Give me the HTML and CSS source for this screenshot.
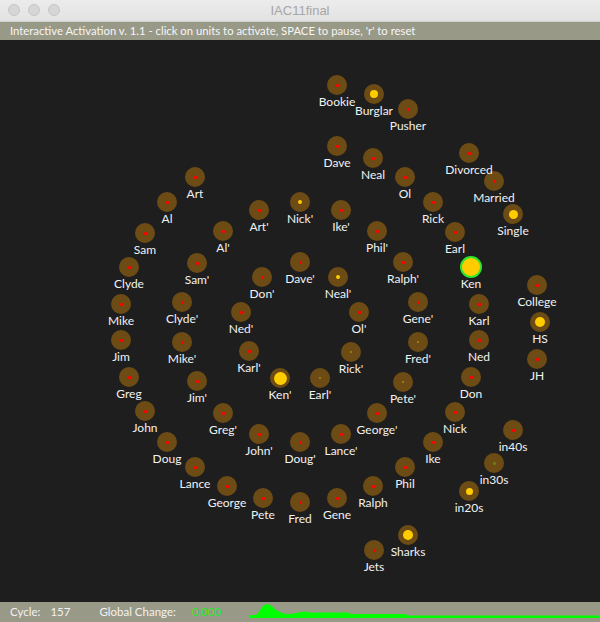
FILE: index.html
```html
<!DOCTYPE html>
<html>
<head>
<meta charset="utf-8">
<title>IAC11final</title>
<link rel="stylesheet" href="styles.css">
</head>
<body>
<div class="window">
  <div class="titlebar">
    <div class="lights"><span class="light"></span><span class="light"></span><span class="light"></span></div>
    <div class="title">IAC11final</div>
  </div>
  <div class="header">Interactive Activation v. 1.1 - click on units to activate, SPACE to pause, 'r' to reset</div>
  <div class="canvas">
    <div class="node" style="left:337px;top:45px"><span class="disc"><i class="dot red"></i></span><span class="lbl">Bookie</span></div>
    <div class="node" style="left:374px;top:54px"><span class="disc"><i class="dot yel" style="width:8px;height:8px"></i></span><span class="lbl">Burglar</span></div>
    <div class="node" style="left:408px;top:69px"><span class="disc"><i class="dot red"></i></span><span class="lbl">Pusher</span></div>
    <div class="node" style="left:337px;top:106px"><span class="disc"><i class="dot red"></i></span><span class="lbl">Dave</span></div>
    <div class="node" style="left:373px;top:118px"><span class="disc"><i class="dot red"></i></span><span class="lbl">Neal</span></div>
    <div class="node" style="left:405px;top:137px"><span class="disc"><i class="dot red"></i></span><span class="lbl">Ol</span></div>
    <div class="node" style="left:469px;top:113px"><span class="disc"><i class="dot red"></i></span><span class="lbl">Divorced</span></div>
    <div class="node" style="left:494px;top:141px"><span class="disc"><i class="dot red"></i></span><span class="lbl">Married</span></div>
    <div class="node" style="left:513px;top:174px"><span class="disc"><i class="dot yel" style="width:9px;height:9px"></i></span><span class="lbl">Single</span></div>
    <div class="node" style="left:433px;top:162px"><span class="disc"><i class="dot red"></i></span><span class="lbl">Rick</span></div>
    <div class="node" style="left:455px;top:192px"><span class="disc"><i class="dot red"></i></span><span class="lbl">Earl</span></div>
    <div class="node" style="left:471px;top:227px"><span class="disc ken"></span><span class="lbl">Ken</span></div>
    <div class="node" style="left:537px;top:245px"><span class="disc"><i class="dot red"></i></span><span class="lbl">College</span></div>
    <div class="node" style="left:479px;top:264px"><span class="disc"><i class="dot red"></i></span><span class="lbl">Karl</span></div>
    <div class="node" style="left:540px;top:282px"><span class="disc"><i class="dot yel" style="width:10px;height:10px"></i></span><span class="lbl">HS</span></div>
    <div class="node" style="left:479px;top:300px"><span class="disc"><i class="dot red"></i></span><span class="lbl">Ned</span></div>
    <div class="node" style="left:537px;top:319px"><span class="disc"><i class="dot red"></i></span><span class="lbl">JH</span></div>
    <div class="node" style="left:471px;top:337px"><span class="disc"><i class="dot red"></i></span><span class="lbl">Don</span></div>
    <div class="node" style="left:455px;top:372px"><span class="disc"><i class="dot red"></i></span><span class="lbl">Nick</span></div>
    <div class="node" style="left:513px;top:390px"><span class="disc"><i class="dot red"></i></span><span class="lbl">in40s</span></div>
    <div class="node" style="left:433px;top:402px"><span class="disc"><i class="dot red"></i></span><span class="lbl">Ike</span></div>
    <div class="node" style="left:494px;top:423px"><span class="disc"><i class="dot grn"></i></span><span class="lbl">in30s</span></div>
    <div class="node" style="left:405px;top:427px"><span class="disc"><i class="dot red"></i></span><span class="lbl">Phil</span></div>
    <div class="node" style="left:469px;top:451px"><span class="disc"><i class="dot yel" style="width:7px;height:7px"></i></span><span class="lbl">in20s</span></div>
    <div class="node" style="left:373px;top:446px"><span class="disc"><i class="dot red"></i></span><span class="lbl">Ralph</span></div>
    <div class="node" style="left:408px;top:495px"><span class="disc"><i class="dot yel" style="width:10px;height:10px"></i></span><span class="lbl">Sharks</span></div>
    <div class="node" style="left:374px;top:510px"><span class="disc"><i class="dot red"></i></span><span class="lbl">Jets</span></div>
    <div class="node" style="left:337px;top:458px"><span class="disc"><i class="dot red"></i></span><span class="lbl">Gene</span></div>
    <div class="node" style="left:300px;top:462px"><span class="disc"><i class="dot red"></i></span><span class="lbl">Fred</span></div>
    <div class="node" style="left:263px;top:458px"><span class="disc"><i class="dot red"></i></span><span class="lbl">Pete</span></div>
    <div class="node" style="left:227px;top:446px"><span class="disc"><i class="dot red"></i></span><span class="lbl">George</span></div>
    <div class="node" style="left:195px;top:427px"><span class="disc"><i class="dot red"></i></span><span class="lbl">Lance</span></div>
    <div class="node" style="left:167px;top:402px"><span class="disc"><i class="dot red"></i></span><span class="lbl">Doug</span></div>
    <div class="node" style="left:145px;top:371px"><span class="disc"><i class="dot red"></i></span><span class="lbl">John</span></div>
    <div class="node" style="left:129px;top:337px"><span class="disc"><i class="dot red"></i></span><span class="lbl">Greg</span></div>
    <div class="node" style="left:121px;top:300px"><span class="disc"><i class="dot red"></i></span><span class="lbl">Jim</span></div>
    <div class="node" style="left:121px;top:264px"><span class="disc"><i class="dot red"></i></span><span class="lbl">Mike</span></div>
    <div class="node" style="left:129px;top:227px"><span class="disc"><i class="dot red"></i></span><span class="lbl">Clyde</span></div>
    <div class="node" style="left:145px;top:193px"><span class="disc"><i class="dot red"></i></span><span class="lbl">Sam</span></div>
    <div class="node" style="left:167px;top:162px"><span class="disc"><i class="dot red"></i></span><span class="lbl">Al</span></div>
    <div class="node" style="left:195px;top:137px"><span class="disc"><i class="dot red"></i></span><span class="lbl">Art</span></div>

    <div class="node" style="left:259px;top:170px"><span class="disc"><i class="dot red"></i></span><span class="lbl">Art'</span></div>
    <div class="node" style="left:300px;top:162px"><span class="disc"><i class="dot yel" style="width:4px;height:4px"></i></span><span class="lbl">Nick'</span></div>
    <div class="node" style="left:341px;top:170px"><span class="disc"><i class="dot red"></i></span><span class="lbl">Ike'</span></div>
    <div class="node" style="left:377px;top:191px"><span class="disc"><i class="dot red"></i></span><span class="lbl">Phil'</span></div>
    <div class="node" style="left:403px;top:222px"><span class="disc"><i class="dot red"></i></span><span class="lbl">Ralph'</span></div>
    <div class="node" style="left:418px;top:262px"><span class="disc"><i class="dot red"></i></span><span class="lbl">Gene'</span></div>
    <div class="node" style="left:418px;top:302px"><span class="disc"><i class="dot olv"></i></span><span class="lbl">Fred'</span></div>
    <div class="node" style="left:403px;top:342px"><span class="disc"><i class="dot olv"></i></span><span class="lbl">Pete'</span></div>
    <div class="node" style="left:377px;top:373px"><span class="disc"><i class="dot red"></i></span><span class="lbl">George'</span></div>
    <div class="node" style="left:341px;top:394px"><span class="disc"><i class="dot red"></i></span><span class="lbl">Lance'</span></div>
    <div class="node" style="left:300px;top:402px"><span class="disc"><i class="dot red"></i></span><span class="lbl">Doug'</span></div>
    <div class="node" style="left:259px;top:394px"><span class="disc"><i class="dot red"></i></span><span class="lbl">John'</span></div>
    <div class="node" style="left:223px;top:373px"><span class="disc"><i class="dot red"></i></span><span class="lbl">Greg'</span></div>
    <div class="node" style="left:197px;top:341px"><span class="disc"><i class="dot red"></i></span><span class="lbl">Jim'</span></div>
    <div class="node" style="left:182px;top:302px"><span class="disc"><i class="dot red"></i></span><span class="lbl">Mike'</span></div>
    <div class="node" style="left:182px;top:262px"><span class="disc"><i class="dot red"></i></span><span class="lbl">Clyde'</span></div>
    <div class="node" style="left:197px;top:223px"><span class="disc"><i class="dot red"></i></span><span class="lbl">Sam'</span></div>
    <div class="node" style="left:223px;top:191px"><span class="disc"><i class="dot red"></i></span><span class="lbl">Al'</span></div>

    <div class="node" style="left:300px;top:222px"><span class="disc"><i class="dot red"></i></span><span class="lbl">Dave'</span></div>
    <div class="node" style="left:338px;top:237px"><span class="disc"><i class="dot yel" style="width:4px;height:4px"></i></span><span class="lbl">Neal'</span></div>
    <div class="node" style="left:359px;top:272px"><span class="disc"><i class="dot red"></i></span><span class="lbl">Ol'</span></div>
    <div class="node" style="left:351px;top:312px"><span class="disc"><i class="dot olv"></i></span><span class="lbl">Rick'</span></div>
    <div class="node" style="left:320px;top:338px"><span class="disc"><i class="dot olv"></i></span><span class="lbl">Earl'</span></div>
    <div class="node" style="left:280px;top:338px"><span class="disc"><i class="dot yel" style="width:13px;height:13px"></i></span><span class="lbl">Ken'</span></div>
    <div class="node" style="left:249px;top:311px"><span class="disc"><i class="dot red"></i></span><span class="lbl">Karl'</span></div>
    <div class="node" style="left:241px;top:272px"><span class="disc"><i class="dot red"></i></span><span class="lbl">Ned'</span></div>
    <div class="node" style="left:262px;top:237px"><span class="disc"><i class="dot red"></i></span><span class="lbl">Don'</span></div>
  </div>
  <div class="footer">
    <span class="stat-label">Cycle:</span>
    <span class="stat-value">157</span>
    <span class="stat-label change">Global Change:</span>
    <span class="stat-green">0.000</span>
    <svg class="graph" width="352" height="20" viewBox="0 0 352 20">
      <polygon fill="#00ff00" points="2,16 2,13 8,13 10,11 12,8 14,5 16,3 19,2 22,3 24,4 26,6 28,8 30,9 33,10.5 36,11.5 40,12 44,11.8 48,11 52,10 56,9.7 60,9.8 62,10.5 64,11 66,10.5 70,10.5 102,10.5 102,12 158,12 159,13.5 352,13.5 352,16"/>
    </svg>
  </div>
</div>
</body>
</html>
```
FILE: styles.css
```css
html, body {
  margin: 0;
  padding: 0;
}
body {
  width: 600px;
  height: 622px;
  overflow: hidden;
  background: #1e1e1e;
  font-family: "Lato", "Open Sans", sans-serif;
}
.window {
  display: flex;
  flex-direction: column;
  width: 600px;
  height: 622px;
}
.titlebar {
  position: relative;
  height: 22px;
  flex: none;
  box-sizing: border-box;
  background: linear-gradient(#ececec, #e2e2e2);
  border-bottom: 1px solid #d0d0d0;
  display: flex;
  align-items: center;
  justify-content: center;
}
.lights {
  position: absolute;
  left: 8px;
  top: 4px;
  display: flex;
  gap: 8px;
}
.light {
  width: 12px;
  height: 12px;
  box-sizing: border-box;
  border-radius: 50%;
  background: #d6d6d6;
  border: 1px solid #c6c6c6;
}
.title {
  font-family: "Liberation Sans", "Open Sans", sans-serif;
  font-size: 13px;
  color: #a6a6a6;
}
.header {
  height: 18px;
  flex: none;
  background: #999987;
  color: #f6f6f6;
  font-size: 11.3px;
  line-height: 18px;
  padding-left: 10px;
  white-space: nowrap;
}
.canvas {
  position: relative;
  flex: 1;
  background: #1e1e1e;
}
.node {
  position: absolute;
  width: 0;
  height: 0;
}
.disc {
  position: absolute;
  left: -10px;
  top: -10px;
  width: 20px;
  height: 20px;
  border-radius: 50%;
  background: #6d4b15;
  display: flex;
  align-items: center;
  justify-content: center;
}
.disc.ken {
  left: -11px;
  top: -11px;
  width: 22px;
  height: 22px;
  box-sizing: border-box;
  background: #ffcc00;
  border: 2px solid #2ee62e;
}
.dot {
  display: block;
  border-radius: 50%;
}
.dot.red {
  width: 3px;
  height: 3px;
  border-radius: 1px;
  background: #ff0000;
}
.dot.yel {
  background: #ffcc00;
}
.dot.olv {
  width: 2px;
  height: 2px;
  border-radius: 0;
  background: #9c7a10;
}
.dot.grn {
  width: 3px;
  height: 3px;
  border-radius: 1px;
  background: #6e7a12;
}
.lbl {
  position: absolute;
  z-index: 1;
  top: 10px;
  left: 0;
  transform: translateX(-50%);
  white-space: nowrap;
  color: #f2f2f2;
  font-size: 12px;
  line-height: 14px;
}
.footer {
  height: 20px;
  flex: none;
  background: #999987;
  color: #f2f2f2;
  font-size: 11.5px;
  line-height: 20px;
  display: flex;
  align-items: center;
  padding-left: 10px;
  white-space: nowrap;
}
.stat-value {
  margin-left: 10px;
}
.change {
  margin-left: 29px;
}
.stat-green {
  margin-left: 16px;
  color: #22ee22;
}
.graph {
  margin-left: auto;
  display: block;
  align-self: stretch;
}
```
